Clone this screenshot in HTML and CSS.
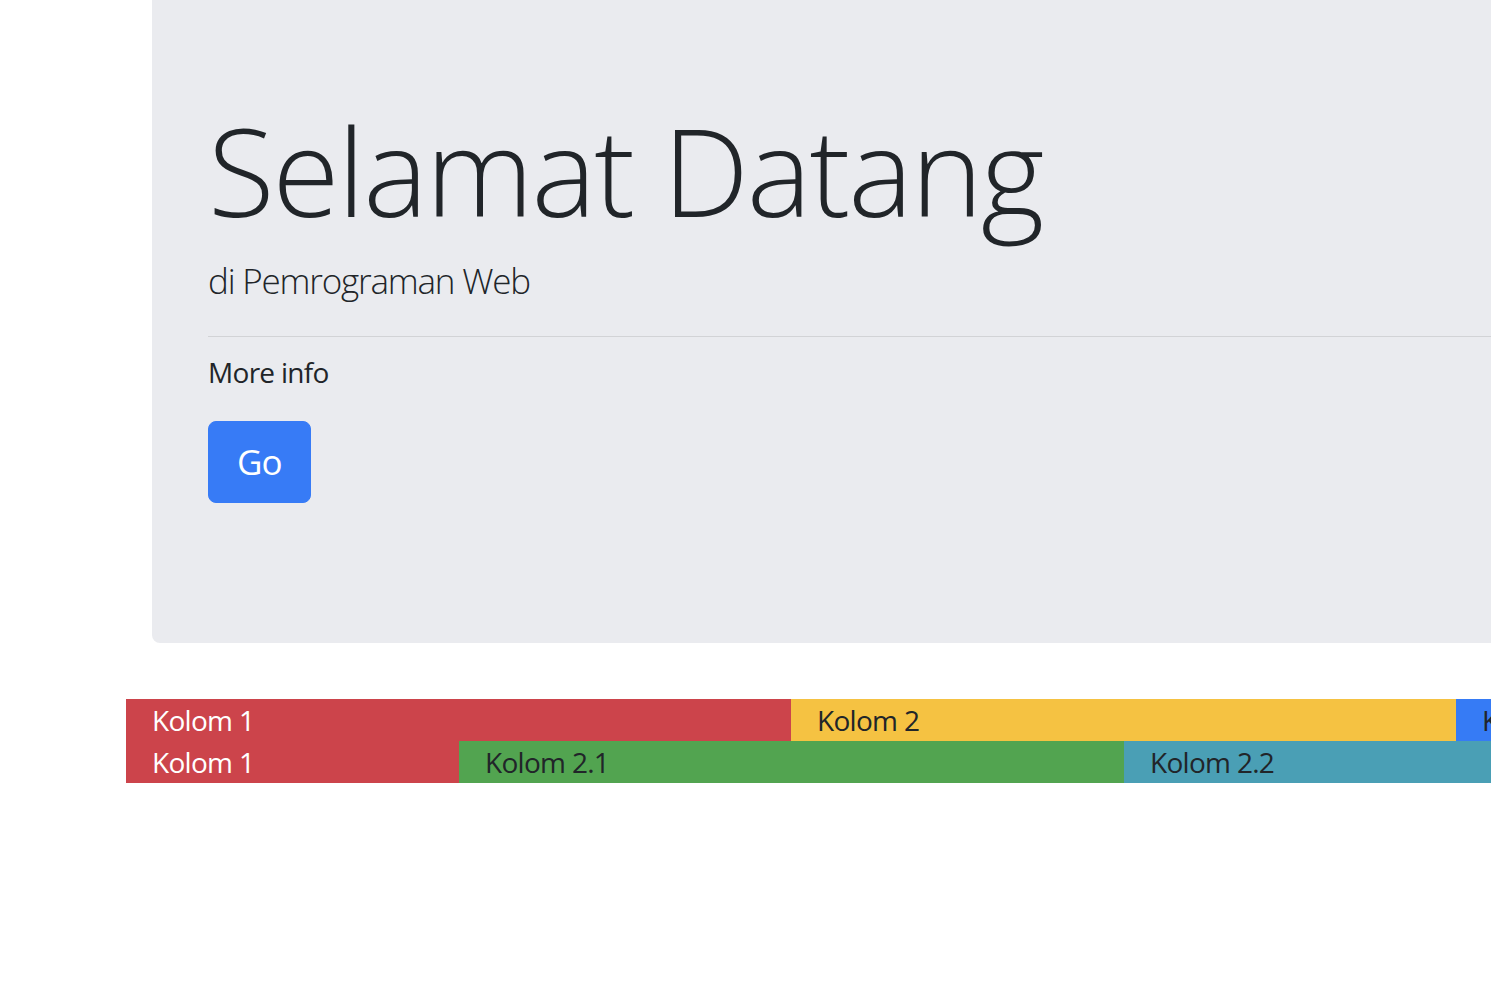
FILE: index.html
```html
<!DOCTYPE html>
<html lang="id">
<head>
<meta charset="utf-8">
<title>Selamat Datang</title>
<link rel="stylesheet" href="styles.css">
</head>
<body>
<div class="container">
  <div class="jumbotron">
    <h1 class="display">Selamat Datang</h1>
    <p class="lead">di Pemrograman Web</p>
    <hr class="divider">
    <p class="info">More info</p>
    <div class="actions"><a class="btn" href="#">Go</a></div>
  </div>
  <div class="row">
    <div class="col col-third bg-red text-white">Kolom 1</div>
    <div class="col col-third bg-yellow">Kolom 2</div>
    <div class="col col-third bg-blue">Kolom 3</div>
  </div>
  <div class="row">
    <div class="col col-sixth bg-red text-white">Kolom 1</div>
    <div class="col col-third bg-green">Kolom 2.1</div>
    <div class="col col-third bg-teal">Kolom 2.2</div>
  </div>
</div>
</body>
</html>
```

FILE: styles.css
```css
html, body {
  margin: 0;
  padding: 0;
  background: #ffffff;
  overflow: hidden;
}
body {
  font-family: "Open Sans", "Segoe UI", "Noto Sans", sans-serif;
  font-size: 28px;
  line-height: 42px;
  color: #212529;
  letter-spacing: -0.7px;
}
.container {
  width: 1995px;
  margin-left: 126px;
}
.jumbotron {
  margin: 0 26px 56px 26px;
  padding: 95px 56px 140px 56px;
  background: #eaebef;
  border-radius: 0 0 8px 8px;
}
.display {
  margin: 0 0 9px 0;
  font-size: 122px;
  line-height: 151px;
  font-weight: 300;
  letter-spacing: -2px;
}
.lead {
  margin: 0;
  font-size: 35px;
  line-height: 52px;
  font-weight: 300;
  letter-spacing: -1.2px;
}
.divider {
  margin: 29px 0 14px 0;
  border: 0;
  border-top: 1px solid rgba(0, 0, 0, 0.1);
  height: 0;
}
.info {
  margin: 0 0 28px 0;
}
.actions {
  display: flex;
}
.btn {
  display: block;
  padding: 14px 28px;
  border: 1px solid #377bf6;
  border-radius: 8px;
  background: #377bf6;
  color: #ffffff;
  font-size: 35px;
  line-height: 52px;
  letter-spacing: -1px;
  text-decoration: none;
}
.row {
  display: flex;
}
.col {
  box-sizing: border-box;
  height: 42px;
  padding-left: 26px;
  flex: none;
  white-space: nowrap;
  overflow: hidden;
}
.col-third { width: 665px; }
.col-sixth { width: 333px; }
.bg-red { background: #cc444b; }
.bg-yellow { background: #f5c242; }
.bg-blue { background: #367bf5; }
.bg-green { background: #52a450; }
.bg-teal { background: #4a9fb5; }
.text-white { color: #ffffff; }
```
